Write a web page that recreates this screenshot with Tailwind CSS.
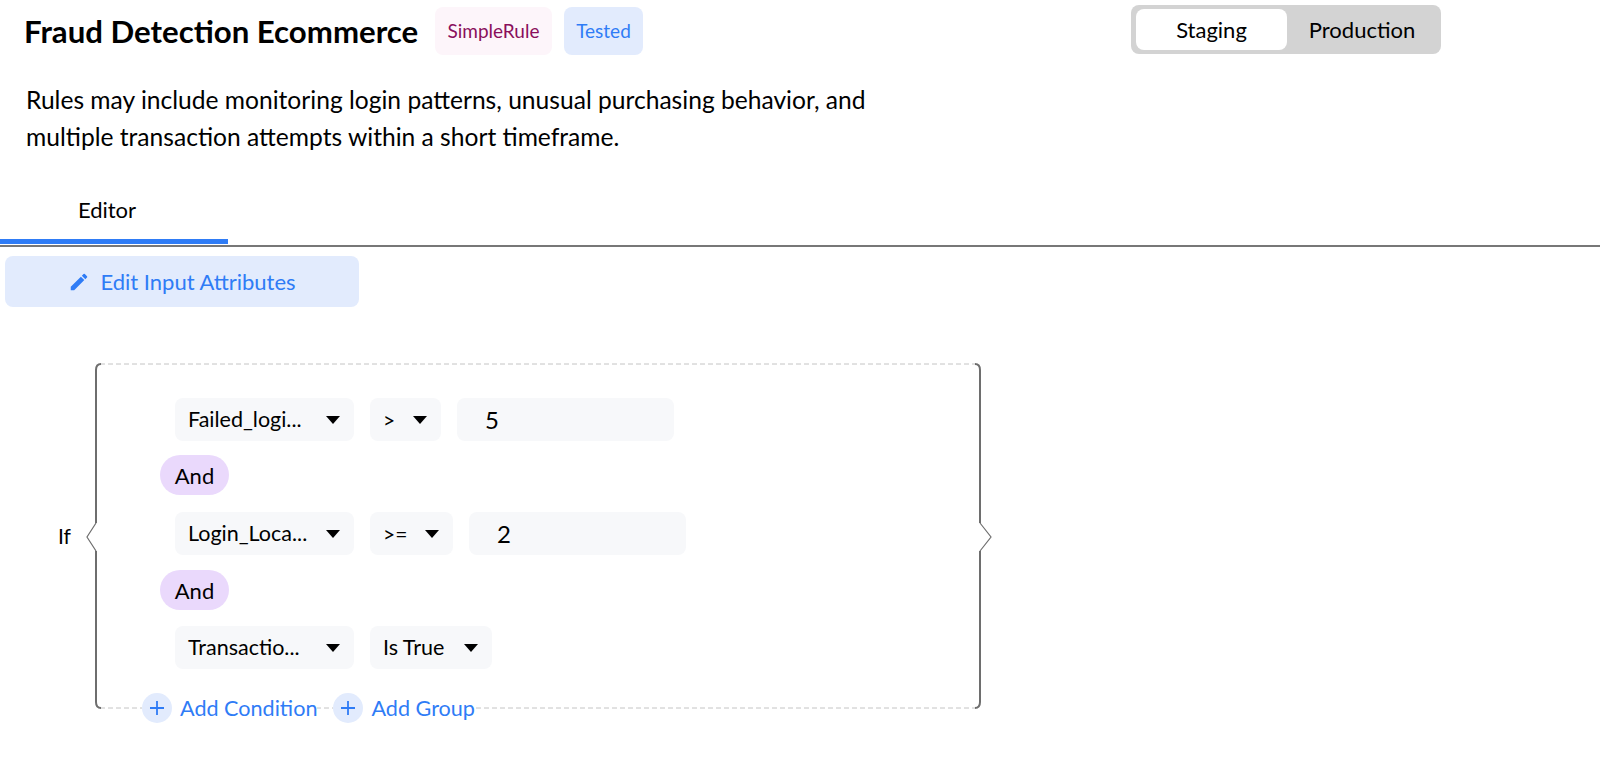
<!DOCTYPE html>
<html lang="en">
<head>
  <meta charset="UTF-8" />
  <title>Fraud Detection Ecommerce</title>
  <script src="https://cdn.jsdelivr.net/npm/@tailwindcss/browser@4"></script>
</head>
<body class="bg-white text-black font-['Lato',sans-serif] overflow-hidden">
  <div class="w-[1600px] h-[765px]">
    <!-- Header -->
    <div class="flex items-start pl-6 pt-[5px] h-[56px]">
      <h1 class="text-[31.2px] leading-[52px] font-bold w-[411px] shrink-0">Fraud Detection Ecommerce</h1>
      <span class="mt-[2px] h-[48px] w-[117px] flex items-center justify-center rounded-lg bg-[#fdf5fa] text-[#8a0f5c] text-[19px]">SimpleRule</span>
      <span class="mt-[2px] ml-3 h-[48px] w-[79px] flex items-center justify-center rounded-lg bg-[#e2ebfd] text-[#2f7cf6] text-[19px]">Tested</span>
      <div class="ml-[488px] w-[310px] h-[49px] rounded-lg bg-[#d3d3d3] flex items-center pl-[5px] text-[22px]">
        <span class="w-[151px] h-[41px] rounded-lg bg-white flex items-center justify-center">Staging</span>
        <span class="flex-1 flex items-center justify-center pr-1">Production</span>
      </div>
    </div>

    <!-- Description -->
    <p class="ml-[26px] mt-[25px] text-[24.6px] leading-[37px] w-[900px]">Rules may include monitoring login patterns, unusual purchasing behavior, and<br />multiple transaction attempts within a short timeframe.</p>

    <!-- Tabs -->
    <div class="mt-[30px] h-[62px] border-b-2 border-[#777777]">
      <div class="w-[228px] h-[59px] border-b-[5px] border-[#2f7cf6] flex items-center justify-center text-[22px] pr-[14px] pb-[5px]">Editor</div>
    </div>

    <!-- Edit button -->
    <button class="ml-[5px] mt-[9px] w-[354px] h-[51px] rounded-lg bg-[#e2ebfd] text-[#2f7cf6] text-[22px] flex items-center justify-center gap-[10px]">
      <svg class="w-[22px] h-[22px]" viewBox="0 0 24 24" fill="currentColor"><path d="M3 17.25V21h3.75L17.81 9.94l-3.75-3.75L3 17.25zM20.71 7.04a1 1 0 0 0 0-1.41l-2.34-2.34a1 1 0 0 0-1.41 0l-1.83 1.83 3.75 3.75 1.83-1.83z"/></svg>
      Edit Input Attributes
    </button>

    <!-- Condition group -->
    <div class="flex items-center mt-[56px]">
      <span class="ml-[58px] w-[38px] text-[21px] leading-none">If</span>
      <div class="relative w-[885px] h-[344px] pl-[64px] pt-[35px]">
        <svg class="absolute left-[-12px] top-0 w-[909px] h-[346px]" viewBox="0 0 909 346" fill="none">
          <path d="M16 1H892M16 345H892" stroke="#c4c4c4" stroke-width="1" stroke-dasharray="5 3" />
          <path d="M17 1Q12 1 12 7V160M12 188V339Q12 345 17 345" stroke="#6e6e6e" stroke-width="2" />
          <path d="M12 160L3 174L12 188" stroke="#6e6e6e" stroke-width="1.2" />
          <path d="M891 1Q896 1 896 7V160M896 188V339Q896 345 891 345" stroke="#6e6e6e" stroke-width="2" />
          <path d="M896 160L907 174L896 188" stroke="#6e6e6e" stroke-width="1.2" />
        </svg>
        <div class="relative flex flex-col items-start">
          <div class="ml-[15px] flex gap-4 h-[43px] text-[21.5px]">
            <div class="w-[179px] rounded-lg bg-[#f7f8fa] flex items-center justify-between pl-[13px] pr-[14px]"><span>Failed_logi...</span><svg class="w-[14px] h-[8px]" viewBox="0 0 14 8"><path d="M0 0H14L7 8Z" /></svg></div>
            <div class="w-[71px] rounded-lg bg-[#f7f8fa] flex items-center justify-between pl-[13px] pr-[14px] text-[21px]"><span>&gt;</span><svg class="w-[14px] h-[8px]" viewBox="0 0 14 8"><path d="M0 0H14L7 8Z" /></svg></div>
            <div class="w-[217px] rounded-lg bg-[#f7f8fa] flex items-center pl-[28px] text-[24px]">5</div>
          </div>
          <div class="mt-[14px] w-[69px] h-[40px] rounded-full bg-[#ead9fc] flex items-center justify-center text-[22px]">And</div>
          <div class="ml-[15px] mt-[17px] flex gap-4 h-[43px] text-[21.5px]">
            <div class="w-[179px] rounded-lg bg-[#f7f8fa] flex items-center justify-between pl-[13px] pr-[14px]"><span>Login_Loca...</span><svg class="w-[14px] h-[8px]" viewBox="0 0 14 8"><path d="M0 0H14L7 8Z" /></svg></div>
            <div class="w-[83px] rounded-lg bg-[#f7f8fa] flex items-center justify-between pl-[13px] pr-[14px] text-[21px]"><span>&gt;=</span><svg class="w-[14px] h-[8px]" viewBox="0 0 14 8"><path d="M0 0H14L7 8Z" /></svg></div>
            <div class="w-[217px] rounded-lg bg-[#f7f8fa] flex items-center pl-[28px] text-[24px]">2</div>
          </div>
          <div class="mt-[15px] w-[69px] h-[40px] rounded-full bg-[#ead9fc] flex items-center justify-center text-[22px]">And</div>
          <div class="ml-[15px] mt-[16px] flex gap-4 h-[43px] text-[21.5px]">
            <div class="w-[179px] rounded-lg bg-[#f7f8fa] flex items-center justify-between pl-[13px] pr-[14px]"><span>Transactio...</span><svg class="w-[14px] h-[8px]" viewBox="0 0 14 8"><path d="M0 0H14L7 8Z" /></svg></div>
            <div class="w-[122px] rounded-lg bg-[#f7f8fa] flex items-center justify-between pl-[13px] pr-[14px]"><span>Is True</span><svg class="w-[14px] h-[8px]" viewBox="0 0 14 8"><path d="M0 0H14L7 8Z" /></svg></div>
          </div>
        </div>
        <!-- Add actions sit over the dashed bottom edge -->
        <div class="absolute left-[46px] top-[329px] flex items-center gap-4 text-[#2f7cf6] text-[21.6px]">
          <div class="flex items-center gap-2 bg-white">
            <span class="w-[30px] h-[30px] rounded-full bg-[#e2ebfd] flex items-center justify-center"><svg class="w-4 h-4" viewBox="0 0 16 16" stroke="currentColor" stroke-width="1.8"><path d="M8 1V15M1 8H15" /></svg></span>
            <span>Add Condition</span>
          </div>
          <div class="flex items-center gap-2 bg-white">
            <span class="w-[30px] h-[30px] rounded-full bg-[#e2ebfd] flex items-center justify-center"><svg class="w-4 h-4" viewBox="0 0 16 16" stroke="currentColor" stroke-width="1.8"><path d="M8 1V15M1 8H15" /></svg></span>
            <span>Add Group</span>
          </div>
        </div>
      </div>
    </div>
  </div>
</body>
</html>
